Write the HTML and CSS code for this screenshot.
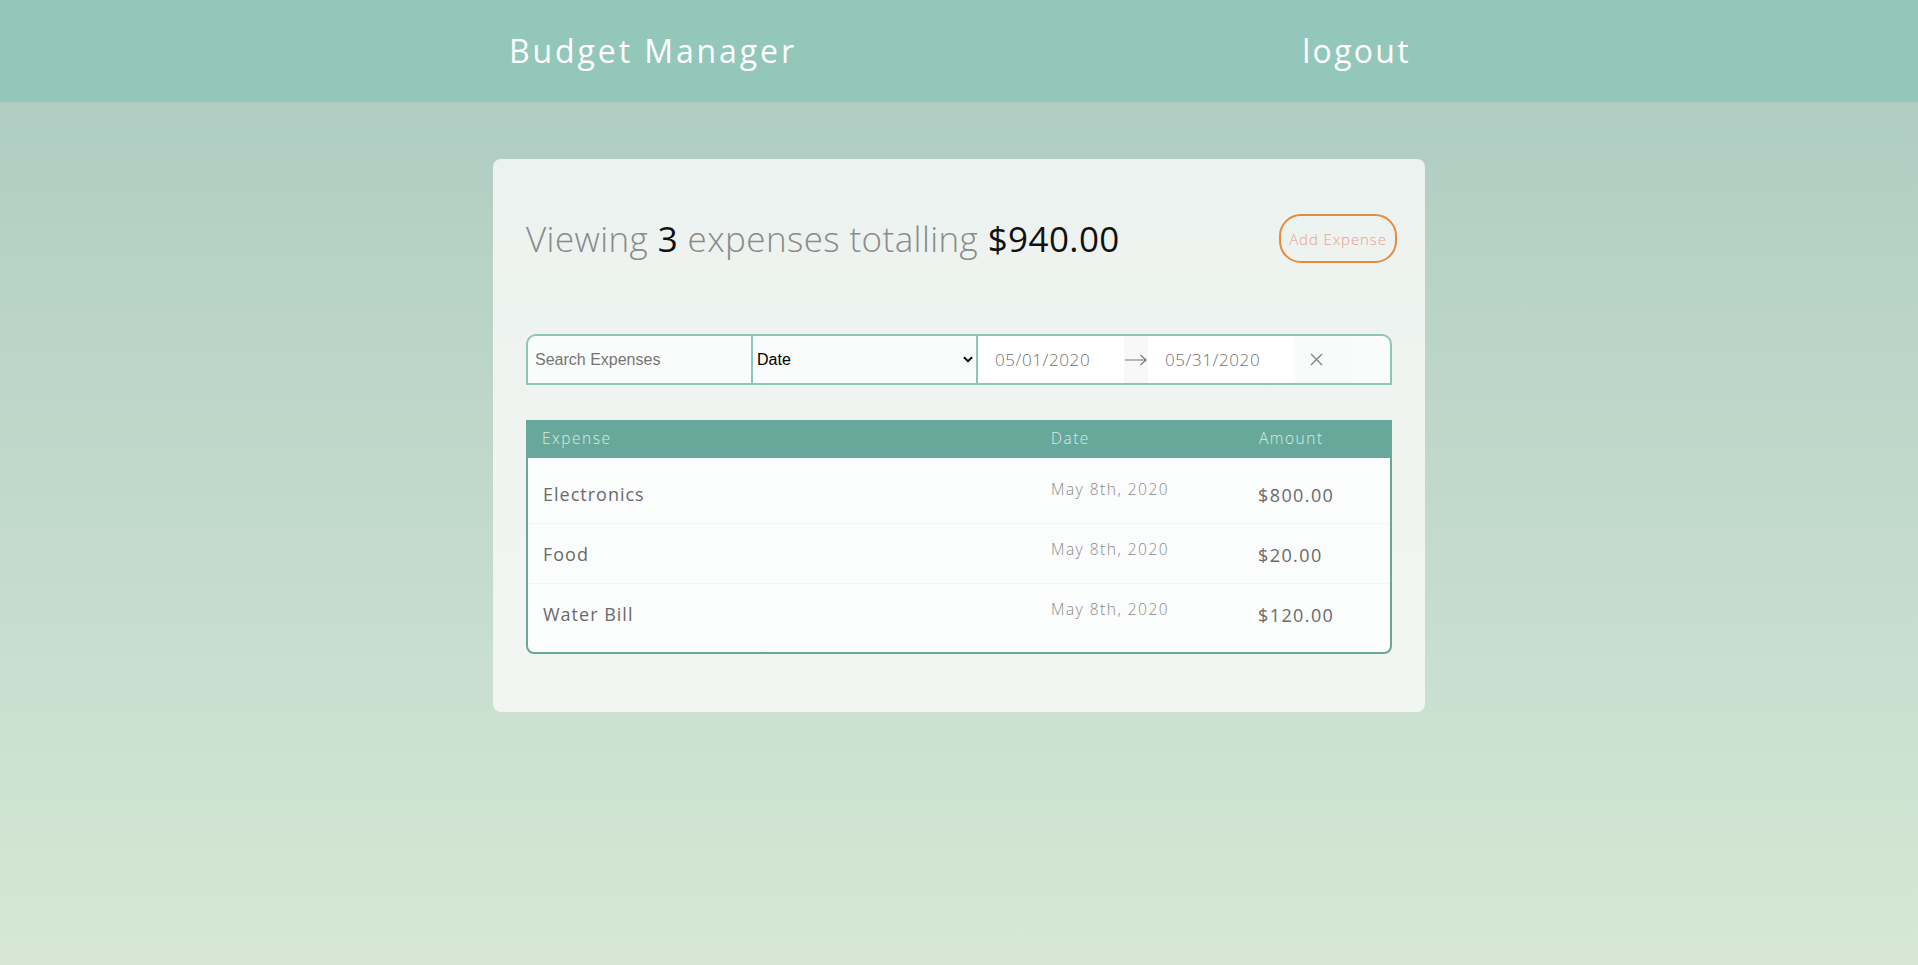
FILE: index.html
```html
<!DOCTYPE html>
<html lang="en">
<head>
<meta charset="utf-8">
<title>Budget Manager</title>
<link rel="stylesheet" href="styles.css">
</head>
<body>
<header class="topbar">
  <div class="topbar-inner">
    <span class="brand">Budget Manager</span>
    <span class="logout">logout</span>
  </div>
</header>
<main class="page">
  <section class="card">
    <div class="summary-row">
      <h1 class="summary">Viewing <span class="strong">3</span> expenses totalling <span class="strong">$940.00</span></h1>
      <button class="add-btn">Add Expense</button>
    </div>

    <div class="filters">
      <input class="search" type="text" placeholder="Search Expenses">
      <div class="select-wrap">
        <span class="select-value">Date</span>
        <svg class="chev" width="10" height="7" viewBox="0 0 10 7"><path d="M1 1.2 L5 5.2 L9 1.2" fill="none" stroke="#000" stroke-width="2"/></svg>
      </div>
      <div class="dates">
        <span class="date-input">05/01/2020</span>
        <span class="arrow"><svg width="24" height="12" viewBox="0 0 24 12"><path d="M1 6 H22 M16.5 1 L22 6 L16.5 11" fill="none" stroke="#777" stroke-width="1.2"/></svg></span>
        <span class="date-input">05/31/2020</span>
        <span class="clear"><svg width="13" height="13" viewBox="0 0 13 13"><path d="M1 1 L12 12 M12 1 L1 12" fill="none" stroke="#808080" stroke-width="1.3"/></svg></span>
      </div>
    </div>

    <div class="table">
      <div class="thead">
        <span>Expense</span>
        <span>Date</span>
        <span>Amount</span>
      </div>
      <div class="tbody">
        <div class="row">
          <span class="name">Electronics</span>
          <span class="date">May 8th, 2020</span>
          <span class="amount">$800.00</span>
        </div>
        <div class="row">
          <span class="name">Food</span>
          <span class="date">May 8th, 2020</span>
          <span class="amount">$20.00</span>
        </div>
        <div class="row">
          <span class="name">Water Bill</span>
          <span class="date">May 8th, 2020</span>
          <span class="amount">$120.00</span>
        </div>
      </div>
    </div>
  </section>
</main>
</body>
</html>
```
FILE: styles.css
```css
* { box-sizing: border-box; }
html, body { margin: 0; padding: 0; }
body {
  min-height: 965px;
  background: linear-gradient(to bottom, #93c7ba 0, #93c7ba 102px, #b0cdc3 102px, #d6e8d5 965px);
  font-family: "Open Sans", "DejaVu Sans", sans-serif;
}
.topbar {
  height: 102px;
  background: #93c7ba;
}
.topbar-inner {
  width: 900px;
  height: 100%;
  margin: 0 auto;
  display: flex;
  align-items: center;
  justify-content: space-between;
  color: #fff;
  font-size: 32px;
  font-weight: 400;
  letter-spacing: 2.3px;
  padding-bottom: 2px;
}
.brand { letter-spacing: 2.9px; }
.logout { margin-right: -2px; }
.page {
  padding-top: 57px;
}
.card {
  width: 932px;
  margin: 0 auto;
  padding: 55px 33px 58px;
  border-radius: 8px;
  background: linear-gradient(to bottom, #ecf2ef, #f2f6f2);
}
.summary-row {
  display: flex;
  align-items: center;
  justify-content: space-between;
  height: 49px;
}
.summary {
  margin: 0;
  font-size: 35px;
  font-weight: 300;
  color: #8a8a8a;
  letter-spacing: 0.4px;
}
.summary .strong {
  color: #111;
  font-weight: 400;
}
.add-btn {
  width: 118px;
  height: 49px;
  margin-right: -5px;
  border: 2px solid #e58b3e;
  border-radius: 22px;
  background: transparent;
  color: #e8a08a;
  font-family: "Open Sans", sans-serif;
  font-size: 15px;
  font-weight: 300;
  letter-spacing: 0.9px;
  padding: 0;
}
.filters {
  margin-top: 71px;
  height: 51px;
  display: flex;
  border: 2px solid #8ec5b5;
  border-radius: 10px 10px 0 0;
  background: #fafcfb;
  overflow: hidden;
}
.search {
  width: 225px;
  border: none;
  border-right: 2px solid #8ec5b5;
  background: transparent;
  padding: 0 0 0 7px;
  font-family: "Liberation Sans", Arial, sans-serif;
  font-size: 16px;
  color: #333;
  outline: none;
}
.search::placeholder { color: #757575; }
.select-wrap {
  width: 225px;
  border-right: 2px solid #8ec5b5;
  display: flex;
  align-items: center;
  justify-content: space-between;
  padding: 0 3px 0 4px;
  font-family: "Liberation Sans", Arial, sans-serif;
  font-size: 16px;
  color: #000;
}
.dates {
  flex: 1;
  display: flex;
  align-items: stretch;
}
.date-input {
  width: 146px;
  background: #fff;
  display: flex;
  align-items: center;
  padding-left: 17px;
  font-size: 17px;
  font-weight: 300;
  letter-spacing: 0.6px;
  color: #707070;
}
.arrow {
  width: 24px;
  display: flex;
  align-items: center;
  justify-content: center;
  background: #f6f9f8;
}
.clear {
  width: 60px;
  display: flex;
  align-items: center;
  padding-left: 16px;
  background: #f8fbfa;
}
.table {
  margin-top: 35px;
  border: 2px solid #68a89b;
  border-radius: 0 0 8px 8px;
  overflow: hidden;
  background: #fbfcfc;
}
.thead {
  display: grid;
  grid-template-columns: 509px 208px 1fr;
  height: 36px;
  align-items: center;
  background: #68a89b;
  color: #d6ece5;
  font-size: 15.5px;
  font-weight: 300;
  letter-spacing: 1.5px;
  padding-bottom: 5px;
}
.thead span { padding-left: 14px; }
.tbody {
  padding: 6px 0 8px;
}
.row {
  display: grid;
  grid-template-columns: 509px 208px 1fr;
  height: 60px;
  border-bottom: 1px solid #f3f6f5;
}
.row:last-child { border-bottom: none; }
.name, .amount {
  align-self: center;
  font-size: 18px;
  font-weight: 400;
  color: #6a6a6a;
  letter-spacing: 1px;
}
.name { padding-left: 15px; }
.amount { padding-left: 13px; padding-top: 2px; letter-spacing: 1.4px; }
.date {
  padding-left: 14px;
  padding-top: 14px;
  font-size: 15.5px;
  font-weight: 300;
  letter-spacing: 1.5px;
  color: #8a8a8a;
}
```
